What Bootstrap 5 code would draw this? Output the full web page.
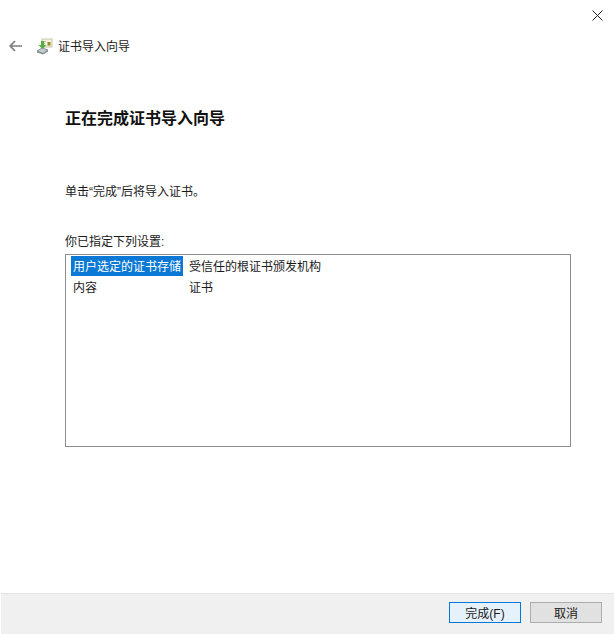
<!DOCTYPE html>
<html lang="zh-CN">
<head>
<meta charset="utf-8">
<title>证书导入向导</title>
<link href="https://cdn.jsdelivr.net/npm/bootstrap@5.3.0/dist/css/bootstrap.min.css" rel="stylesheet">
<style>
html,body{height:100%}
body{font-family:"Liberation Sans","Noto Sans CJK SC",sans-serif;font-size:12px;line-height:16px;color:#1a1a1a;background:#fff;width:614px;height:635px;overflow:hidden}
.wiz{height:635px}
.closebar{height:30px;padding-right:11px}
.headbar{height:24px;margin-top:4px;padding-left:9px}
.headtxt{padding-top:2px}
.backic{margin-right:14px}
.wizicon{margin-right:5px}
.wizbody{padding:0 43px 0 65px}
.wiztitle{font-size:16px;font-weight:700;line-height:22px;margin:50px 0 0;color:#111}
.intro{margin:54px 0 0}
.lbl{margin:34px 0 4px}
.setbox{height:193px;border:1px solid #8c8c8c;padding:1px 5px 0}
.setrow{height:20px;line-height:22px;margin-bottom:1px}
.keycell{width:112px;padding-left:2px;margin-right:6px;white-space:nowrap}
.keycell.sel{background:#0a78d4;color:#fff}
.wizfoot{height:41px;margin-top:auto;margin-bottom:1px;margin-left:1px;background:#f0f0f0;border-top:1px solid #e4e4e4;padding:8px 12px 0 0;gap:9px}
.wbtn{width:72px;height:21px;font-size:12px;line-height:19px;padding:2px 0 0;border-radius:0;border:1px solid #adadad;background:#e1e1e1;color:#1a1a1a}
.wbtn.dflt{border:1.5px solid #0078d7;background:#e5f1fb}
</style>
</head>
<body>
<div class="wiz d-flex flex-column">
  <div class="closebar d-flex justify-content-end align-items-center">
    <svg width="11" height="11" viewBox="0 0 11 11" aria-label="关闭"><path d="M.5.5l10 10M10.5.5l-10 10" stroke="#222" stroke-width="1" fill="none"/></svg>
  </div>
  <div class="headbar d-flex align-items-center">
    <svg class="backic" width="13" height="12" viewBox="0 0 13 12" aria-label="返回"><path d="M6 1L1.2 6 6 11M1.5 6H13" stroke="#7d7d7d" stroke-width="1.7" fill="none"/></svg>
    <svg class="wizicon" width="17" height="17" viewBox="0 0 17 17">
      <rect x="6" y="1" width="10" height="8" fill="#f6f3dc" stroke="#c9c6a6" stroke-width="1"/>
      <rect x="11.500" y="4" width="3" height="3.500" fill="#9a8a2e"/>
      <path d="M6 3.500h4M6 5.500h3" stroke="#b5b28e"/>
      <path d="M5 3v4H2.500L6.500 11l4-4H8V3z" fill="#52b043"/>
      <path d="M1 13l5-3 6 2-5 3.500z" fill="#c4cdd2" stroke="#6f7b80" stroke-width=".8"/>
      <path d="M1 13v1.500l6 2 5-3V12l-5 3.500z" fill="#7f8a90"/>
    </svg>
    <span class="headtxt">证书导入向导</span>
  </div>
  <div class="wizbody">
    <h1 class="wiztitle">正在完成证书导入向导</h1>
    <p class="intro">单击“完成”后将导入证书。</p>
    <p class="lbl">你已指定下列设置:</p>
    <div class="setbox">
      <div class="setrow d-flex"><div class="keycell sel">用户选定的证书存储</div><div>受信任的根证书颁发机构</div></div>
      <div class="setrow d-flex"><div class="keycell">内容</div><div>证书</div></div>
    </div>
  </div>
  <div class="wizfoot d-flex justify-content-end align-items-start">
    <button type="button" class="btn wbtn dflt">完成(F)</button>
    <button type="button" class="btn wbtn">取消</button>
  </div>
</div>
<script src="https://cdn.jsdelivr.net/npm/bootstrap@5.3.0/dist/js/bootstrap.bundle.min.js"></script>
</body>
</html>
